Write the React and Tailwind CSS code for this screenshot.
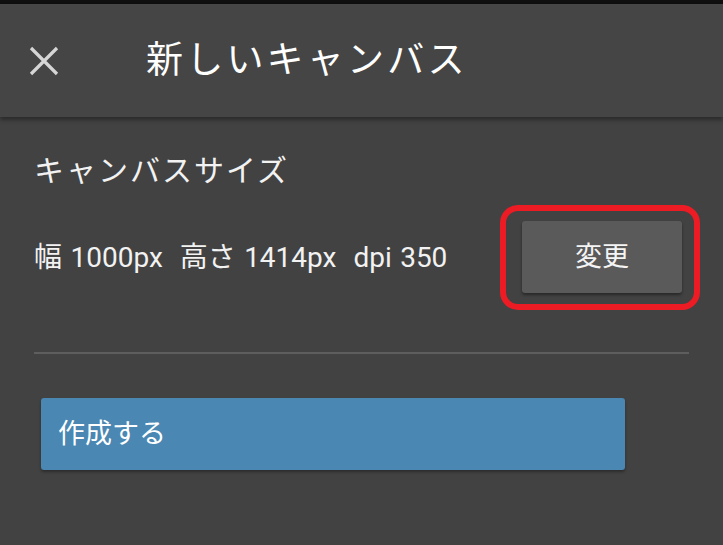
export default function App() {
  const font = { fontFamily: "Roboto, 'Noto Sans CJK JP', sans-serif" };

  return (
    <div className="w-[723px] h-[545px] bg-[#424242] overflow-hidden flex flex-col text-white" style={font}>
      {/* status strip */}
      <div className="h-[4px] bg-[#0f0f0f]" />

      {/* HEADER */}
      <div className="h-[113px] bg-[#454545] flex items-center pl-[29px] shadow-[0_3px_4px_rgba(0,0,0,0.35)] relative z-10">
        <svg width="30" height="30" viewBox="0 0 30 30" className="shrink-0">
          <path d="M2 2 L28 28 M28 2 L2 28" stroke="#d6d6d6" strokeWidth="3.2" />
        </svg>
        <h1 className="ml-[87px] text-[37px] leading-none tracking-[3.2px] text-white">新しいキャンバス</h1>
      </div>

      {/* BODY */}
      <div className="flex flex-col px-[34px] pt-[36px]">
        <p className="text-[30px] leading-[36px] tracking-[2px] text-[#f2f2f2]">キャンバスサイズ</p>

        <div className="flex items-center mt-[16px] -mr-[11px]">
          <p className="text-[28px] leading-none whitespace-pre [word-spacing:1.5px] text-[#f2f2f2]">幅 1000px  高さ 1414px  dpi 350</p>
          <div className="ml-auto border-[6px] border-[#ed1c24] rounded-[18px] pl-[16px] pr-[12px] pt-[10px] pb-[11px]">
            <button className="block w-[160px] h-[72px] bg-[#5a5a5b] rounded-[3px] shadow-[0_2px_3px_rgba(0,0,0,0.4)] text-[27px] text-[#f4f4f4]">
              変更
            </button>
          </div>
        </div>

        <div className="h-[2px] bg-[#5e5e5e] mt-[42px]" />

        <button className="mt-[44px] ml-[7px] w-[584px] h-[72px] bg-[#4a87b3] rounded-[3px] shadow-[0_2px_3px_rgba(0,0,0,0.35)] text-left pl-[17px] text-[27px] text-white">
          作成する
        </button>
      </div>
    </div>
  );
}
